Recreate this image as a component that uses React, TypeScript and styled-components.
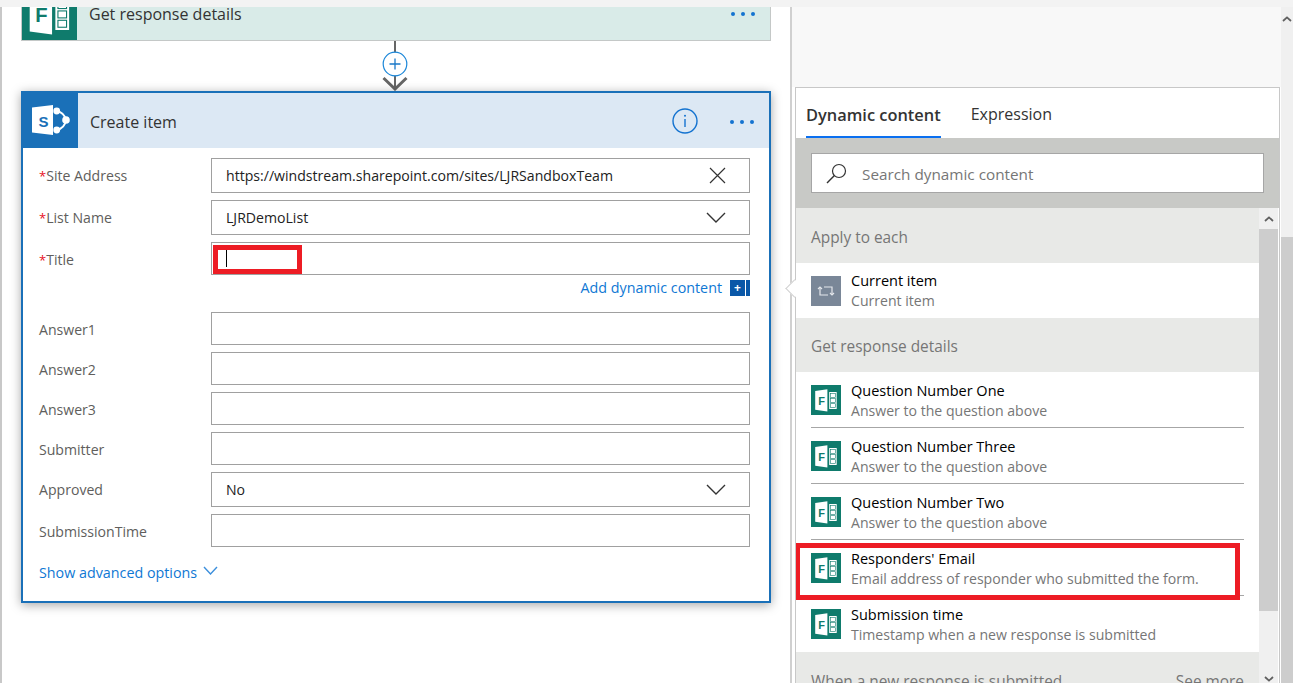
import React from 'react'
import styled, { createGlobalStyle } from 'styled-components'

const GlobalStyle = createGlobalStyle`
    html, body {
        margin: 0;
        height: 100%;
        overflow: hidden;
        background: #ffffff;
    }
    body {
        font-family: "Open Sans", "Liberation Sans", sans-serif;
        font-size: 14px;
        color: #333333;
    }
    * {
        box-sizing: border-box;
    }
`

const BLUE = '#1a70b8'
const TEAL = '#0f7b6c'

const FormsIcon: React.FunctionComponent<{ size: number }> = ({ size }) => (
    <svg width={size} height={size} viewBox="0 0 30 30" style={{ display: 'block', flex: 'none' }}>
        <rect width="30" height="30" fill={TEAL} />
        <polygon points="4.2,6 16.4,4.3 16.4,26.5 4.2,24.8" fill="#ffffff" />
        <text x="7.2" y="19.5" fontFamily="Liberation Sans" fontWeight="700" fontSize="11" fill={TEAL}>F</text>
        <rect x="18.2" y="7" width="7.5" height="17" fill="#ffffff" />
        <rect x="19.6" y="8.5" width="4.7" height="3.8" fill="none" stroke={TEAL} strokeWidth="0.6" />
        <rect x="19.6" y="13.6" width="4.7" height="3.8" fill="none" stroke={TEAL} strokeWidth="0.6" />
        <rect x="19.6" y="18.7" width="4.7" height="3.8" fill="none" stroke={TEAL} strokeWidth="0.6" />
    </svg>
)

const SharePointIcon = () => (
    <svg width="55" height="55" viewBox="0 0 55 55" style={{ display: 'block', flex: 'none' }}>
        <rect width="55" height="55" fill={BLUE} />
        <path d="M33.7 18 A12 12 0 0 1 43 27 A12 12 0 0 1 33.7 37" fill="none" stroke="#ffffff" strokeWidth="1.8" />
        <circle cx="33.7" cy="18" r="3.4" fill="#ffffff" />
        <circle cx="43" cy="27" r="3.8" fill="#ffffff" />
        <circle cx="33.7" cy="37" r="3.4" fill="#ffffff" />
        <polygon points="9,14.5 30,12 30,42 9,39.5" fill="#ffffff" />
        <text x="15.5" y="34" fontFamily="Liberation Sans" fontWeight="700" fontSize="15" fill={BLUE}>S</text>
    </svg>
)

const LoopIcon = () => (
    <svg width="30" height="30" viewBox="0 0 30 30" style={{ display: 'block', flex: 'none' }}>
        <rect width="30" height="30" fill="#7a8798" />
        <path d="M9 12 V19 H17 M21 18 V11 H13" fill="none" stroke="#e4e7eb" strokeWidth="1.2" />
        <path d="M7 13 L9 11 L11 13 M19 17 L21 19 L23 17" fill="none" stroke="#e4e7eb" strokeWidth="1.2" />
    </svg>
)

const Dots = () => (
    <svg width="28" height="6" viewBox="0 0 28 6" style={{ display: 'block' }}>
        <circle cx="4" cy="3" r="2" fill="#1473d0" />
        <circle cx="14" cy="3" r="2" fill="#1473d0" />
        <circle cx="24" cy="3" r="2" fill="#1473d0" />
    </svg>
)

const Chevron: React.FunctionComponent<{ width: number; height: number; color: string }> = ({ width, height, color }) => (
    <svg width={width} height={height} viewBox={`0 0 ${width} ${height}`} style={{ display: 'block', flex: 'none' }}>
        <path d={`M1 1 L${width / 2} ${height - 1} L${width - 1} 1`} fill="none" stroke={color} strokeWidth="1.4" />
    </svg>
)

const Connector = () => (
    <svg width="26" height="50" viewBox="0 0 26 50" style={{ display: 'block', marginRight: 2 }}>
        <path d="M13 0 L13 48" stroke="#666666" strokeWidth="2" />
        <path d="M1.5 37 L13 48 L24.5 37" fill="none" stroke="#666666" strokeWidth="3" />
        <circle cx="13" cy="23" r="11.8" fill="#ffffff" stroke="#1a86d8" strokeWidth="1.2" />
        <path d="M7.5 23 L18.5 23 M13 17.5 L13 28.5" stroke="#1a78c8" strokeWidth="1.3" />
    </svg>
)

const ScrollArrow: React.FunctionComponent<{ down?: boolean }> = ({ down }) => (
    <svg width="10" height="6" viewBox="0 0 10 6" style={{ display: 'block', transform: down ? 'rotate(180deg)' : undefined }}>
        <path d="M1 5 L5 1.4 L9 5" fill="none" stroke="#606060" strokeWidth="1.8" />
    </svg>
)

const Questions = [
    { title: 'Question Number One', sub: 'Answer to the question above' },
    { title: 'Question Number Three', sub: 'Answer to the question above' },
    { title: 'Question Number Two', sub: 'Answer to the question above' },
    { title: "Responders' Email", sub: 'Email address of responder who submitted the form.' },
    { title: 'Submission time', sub: 'Timestamp when a new response is submitted' }
]

const App: React.FunctionComponent = () => (
    <Page>
        <GlobalStyle />
        <TopStrip />
        <Main>
            <Canvas>
                <SourceCard>
                    <FormsIcon size={55} />
                    <CardTitle>Get response details</CardTitle>
                    <DotsSlot>
                        <Dots />
                    </DotsSlot>
                </SourceCard>
                <Connector />
                <ActionCard>
                    <ActionHeader>
                        <SharePointIcon />
                        <CardTitle>Create item</CardTitle>
                        <InfoSlot>
                            <svg width="26" height="26" viewBox="0 0 26 26" style={{ display: 'block' }}>
                                <circle cx="13" cy="13" r="12" fill="none" stroke="#1473d0" strokeWidth="1.4" />
                                <path d="M13 11 L13 19" stroke="#1473d0" strokeWidth="1.4" />
                                <circle cx="13" cy="7.8" r="1" fill="#1473d0" />
                            </svg>
                        </InfoSlot>
                        <DotsSlot>
                            <Dots />
                        </DotsSlot>
                    </ActionHeader>
                    <Form>
                        <Row>
                            <Label><Star>*</Star>Site Address</Label>
                            <Field $height={35}>
                                https://windstream.sharepoint.com/sites/LJRSandboxTeam
                                <FieldIcon>
                                    <svg width="17" height="17" viewBox="0 0 17 17" style={{ display: 'block' }}>
                                        <path d="M1 1 L16 16 M16 1 L1 16" stroke="#333333" strokeWidth="1.2" />
                                    </svg>
                                </FieldIcon>
                            </Field>
                        </Row>
                        <Row>
                            <Label><Star>*</Star>List Name</Label>
                            <Field $height={35}>
                                LJRDemoList
                                <FieldIcon>
                                    <Chevron width={20} height={11} color="#333333" />
                                </FieldIcon>
                            </Field>
                        </Row>
                        <Row>
                            <Label $low><Star>*</Star>Title</Label>
                            <Field $height={33}>
                                <Caret />
                            </Field>
                            <TitleMark />
                        </Row>
                        <AddRow>
                            <LinkText>Add dynamic content</LinkText>
                            <AddIcon>
                                <AddSquare>+</AddSquare>
                                <AddStrip />
                            </AddIcon>
                        </AddRow>
                        <Row>
                            <Label $low>Answer1</Label>
                            <Field $height={33} />
                        </Row>
                        <Row>
                            <Label $low>Answer2</Label>
                            <Field $height={33} />
                        </Row>
                        <Row>
                            <Label $low>Answer3</Label>
                            <Field $height={33} />
                        </Row>
                        <Row>
                            <Label $low>Submitter</Label>
                            <Field $height={33} />
                        </Row>
                        <Row>
                            <Label>Approved</Label>
                            <Field $height={35}>
                                No
                                <FieldIcon>
                                    <Chevron width={20} height={11} color="#333333" />
                                </FieldIcon>
                            </Field>
                        </Row>
                        <Row>
                            <Label $low>SubmissionTime</Label>
                            <Field $height={33} />
                        </Row>
                        <AdvancedRow>
                            <LinkText>Show advanced options</LinkText>
                            <AdvancedChevron>
                                <Chevron width={15} height={9} color="#3c8fdc" />
                            </AdvancedChevron>
                        </AdvancedRow>
                    </Form>
                </ActionCard>
            </Canvas>
            <SidePane>
                <Panel>
                    <Callout />
                    <Tabs>
                        <Tab $active>Dynamic content</Tab>
                        <Tab>Expression</Tab>
                    </Tabs>
                    <SearchBand>
                        <SearchBox>
                            <svg width="21" height="21" viewBox="0 0 21 21" style={{ display: 'block', flex: 'none' }}>
                                <circle cx="13" cy="8" r="6.5" fill="none" stroke="#333333" strokeWidth="1.2" />
                                <path d="M8.4 12.6 L1 20" stroke="#333333" strokeWidth="1.4" />
                            </svg>
                            <Placeholder>Search dynamic content</Placeholder>
                        </SearchBox>
                    </SearchBand>
                    <ListArea>
                        <List>
                            <GroupHeader $height={55}>Apply to each</GroupHeader>
                            <LoopItem>
                                <LoopIcon />
                                <LoopText>
                                    <ItemTitle>Current item</ItemTitle>
                                    <ItemSub>Current item</ItemSub>
                                </LoopText>
                            </LoopItem>
                            <GroupHeader $height={54}>Get response details</GroupHeader>
                            {Questions.map((item, index) => (
                                <Item key={item.title} $last={index === Questions.length - 1}>
                                    <FormsIcon size={30} />
                                    <ItemText>
                                        <ItemTitle>{item.title}</ItemTitle>
                                        <ItemSub>{item.sub}</ItemSub>
                                    </ItemText>
                                </Item>
                            ))}
                            <GroupHeader $height={55}>
                                When a new response is submitted
                                <SeeMore>See more</SeeMore>
                            </GroupHeader>
                            <EmailMark />
                        </List>
                        <InnerScroll>
                            <ScrollButton><ScrollArrow /></ScrollButton>
                            <InnerThumb />
                            <ScrollEnd><ScrollArrow down /></ScrollEnd>
                        </InnerScroll>
                    </ListArea>
                </Panel>
            </SidePane>
            <OuterScroll>
                <ScrollButton $height={24}><ScrollArrow /></ScrollButton>
                <OuterGap />
                <OuterThumb />
            </OuterScroll>
        </Main>
    </Page>
)

export default App

const Page = styled.div`
    width: 1293px;
    height: 683px;
    display: flex;
    flex-direction: column;
    overflow: hidden;
    background: #ffffff;
`
const TopStrip = styled.div`
    height: 7px;
    flex: none;
    background: #f3f3f3;
    position: relative;
    z-index: 2;
`
const Main = styled.div`
    flex: 1;
    min-height: 0;
    display: flex;
`
const Canvas = styled.div`
    width: 792px;
    flex: none;
    display: flex;
    flex-direction: column;
    align-items: center;
    padding-left: 2px;
    padding-right: 2px;
    border-left: 2px solid #c8c8c8;
    border-right: 2px solid #d0d0d0;
`
const SourceCard = styled.div`
    width: 750px;
    height: 55px;
    margin-top: -21px;
    flex: none;
    display: flex;
    align-items: center;
    background: #d9ebe8;
    border-bottom: 1px solid #c4c8c7;
    border-right: 1px solid #c4c8c7;
    border-left: 1px solid #c4c8c7;
    overflow: hidden;
`
const CardTitle = styled.div`
    flex: 1;
    padding: 2px 0 0 12px;
    font-size: 16px;
    color: #333333;
`
const DotsSlot = styled.div`
    width: 44px;
    padding: 2px 0 0 3px;
    flex: none;
`
const InfoSlot = styled.div`
    width: 26px;
    margin-right: 27px;
    flex: none;
`
const ActionCard = styled.div`
    width: 750px;
    height: 512px;
    flex: none;
    border: 2px solid ${BLUE};
    background: #ffffff;
    box-shadow: 0 2px 10px rgba(0, 0, 0, 0.35);
`
const ActionHeader = styled.div`
    height: 55px;
    display: flex;
    align-items: center;
    background: #dce8f4;
`
const Form = styled.div`
    display: flex;
    flex-direction: column;
    gap: 7px;
    padding: 10px 19px 0 16px;
`
const Row = styled.div`
    display: flex;
    align-items: center;
    position: relative;
`
const Label = styled.div<{ $low?: boolean }>`
    width: 172px;
    flex: none;
    padding-top: ${props => (props.$low ? 2 : 0)}px;
    font-size: 14.1px;
    color: #605e5c;
`
const Star = styled.span`
    color: #e81123;
    font-size: 13px;
`
const Field = styled.div<{ $height: number }>`
    flex: 1;
    height: ${props => props.$height}px;
    display: flex;
    align-items: center;
    justify-content: space-between;
    padding: 0 23px 1px 14px;
    border: 1px solid #a0a0a0;
    font-size: 14.1px;
    color: #222222;
`
const FieldIcon = styled.div`
    flex: none;
`
const Caret = styled.div`
    width: 1px;
    height: 18px;
    background: #000000;
`
const TitleMark = styled.div`
    position: absolute;
    left: 174px;
    top: 3px;
    width: 89px;
    height: 29px;
    border: 5px solid #ed1c24;
`
const AddRow = styled.div`
    height: 25px;
    margin-top: -2px;
    display: flex;
    align-items: flex-start;
    justify-content: flex-end;
    gap: 8px;
`
const LinkText = styled.div`
    font-size: 14.3px;
    line-height: 16px;
    color: #0f78d4;
`
const AddIcon = styled.div`
    display: flex;
    gap: 1px;
    height: 16px;
`
const AddSquare = styled.div`
    width: 15px;
    background: #0a58a8;
    color: #ffffff;
    font-size: 12px;
    font-weight: 700;
    line-height: 15px;
    text-align: center;
`
const AddStrip = styled.div`
    width: 4px;
    background: #0a58a8;
`
const AdvancedRow = styled.div`
    margin-top: 11px;
    display: flex;
    align-items: center;
    gap: 6px;
`
const AdvancedChevron = styled.div`
    margin-top: -5px;
`
const SidePane = styled.div`
    width: 489px;
    flex: none;
    padding: 80px 1px 0 3px;
    background: linear-gradient(#f8f8f8 80px, #ffffff 80px);
`
const Panel = styled.div`
    height: 100%;
    display: flex;
    flex-direction: column;
    position: relative;
    border: 1px solid #c8c8c8;
    border-bottom: 0;
    background: #ffffff;
`
const Callout = styled.div`
    position: absolute;
    left: -8px;
    top: 194px;
    width: 13px;
    height: 13px;
    background: #ffffff;
    border-left: 1px solid #d0d0d0;
    border-bottom: 1px solid #d0d0d0;
    transform: rotate(45deg);
`
const Tabs = styled.div`
    height: 50px;
    flex: none;
    display: flex;
    gap: 30px;
    padding-left: 10px;
`
const Tab = styled.div<{ $active?: boolean }>`
    padding-top: 5px;
    font-size: ${props => (props.$active ? 16.4 : 16)}px;
    line-height: 43px;
    font-weight: ${props => (props.$active ? 600 : 400)};
    color: #333333;
    border-bottom: 2px solid ${props => (props.$active ? '#0a6ff0' : 'transparent')};
`
const SearchBand = styled.div`
    height: 70px;
    flex: none;
    padding: 15px 15px;
    background: #c8c9c6;
`
const SearchBox = styled.div`
    height: 40px;
    display: flex;
    align-items: center;
    gap: 15px;
    padding-left: 14px;
    border: 1px solid #a6a6a6;
    background: #ffffff;
`
const Placeholder = styled.div`
    padding-top: 2px;
    font-size: 15.3px;
    color: #767676;
`
const ListArea = styled.div`
    flex: 1;
    min-height: 0;
    display: flex;
`
const List = styled.div`
    flex: 1;
    min-width: 0;
    position: relative;
    overflow: hidden;
`
const GroupHeader = styled.div<{ $height: number }>`
    height: ${props => props.$height}px;
    display: flex;
    align-items: center;
    justify-content: space-between;
    padding: 3px 15px 0;
    background: #e8e9e7;
    font-size: 15.4px;
    color: #767676;
`
const SeeMore = styled.span`
    color: #767676;
`
const LoopItem = styled.div`
    height: 55px;
    display: flex;
    align-items: center;
    gap: 10px;
    padding-left: 15px;
`
const Item = styled.div<{ $last?: boolean }>`
    height: 56px;
    margin: 0 15px;
    padding-top: 13px;
    display: flex;
    gap: 10px;
    border-bottom: ${props => (props.$last ? '0' : '1px solid #a6a6a6')};
`
const ItemText = styled.div`
    min-width: 0;
    margin-top: -4px;
`
const LoopText = styled.div`
    min-width: 0;
`
const ItemTitle = styled.div`
    font-size: 14.5px;
    line-height: 20px;
    color: #000000;
`
const ItemSub = styled.div`
    font-size: 14.1px;
    line-height: 20px;
    color: #767676;
`
const EmailMark = styled.div`
    position: absolute;
    left: -1px;
    top: 335px;
    width: 445px;
    height: 57px;
    border: 5px solid #ed1c24;
`
const InnerScroll = styled.div`
    width: 19px;
    margin-right: 1px;
    flex: none;
    display: flex;
    flex-direction: column;
    background: #f0f0f0;
`
const ScrollButton = styled.div<{ $height?: number }>`
    height: ${props => props.$height ?? 21}px;
    flex: none;
    display: flex;
    align-items: center;
    justify-content: center;
`
const InnerThumb = styled.div`
    height: 382px;
    flex: none;
    background: #cdcdcd;
`
const ScrollEnd = styled.div`
    flex: 1;
    display: flex;
    align-items: flex-end;
    justify-content: center;
    padding-bottom: 1px;
`
const OuterScroll = styled.div`
    width: 12px;
    flex: none;
    display: flex;
    flex-direction: column;
    background: #f0f0f0;
`
const OuterGap = styled.div`
    height: 206px;
    flex: none;
`
const OuterThumb = styled.div`
    flex: 1;
    background: #cdcdcd;
`
